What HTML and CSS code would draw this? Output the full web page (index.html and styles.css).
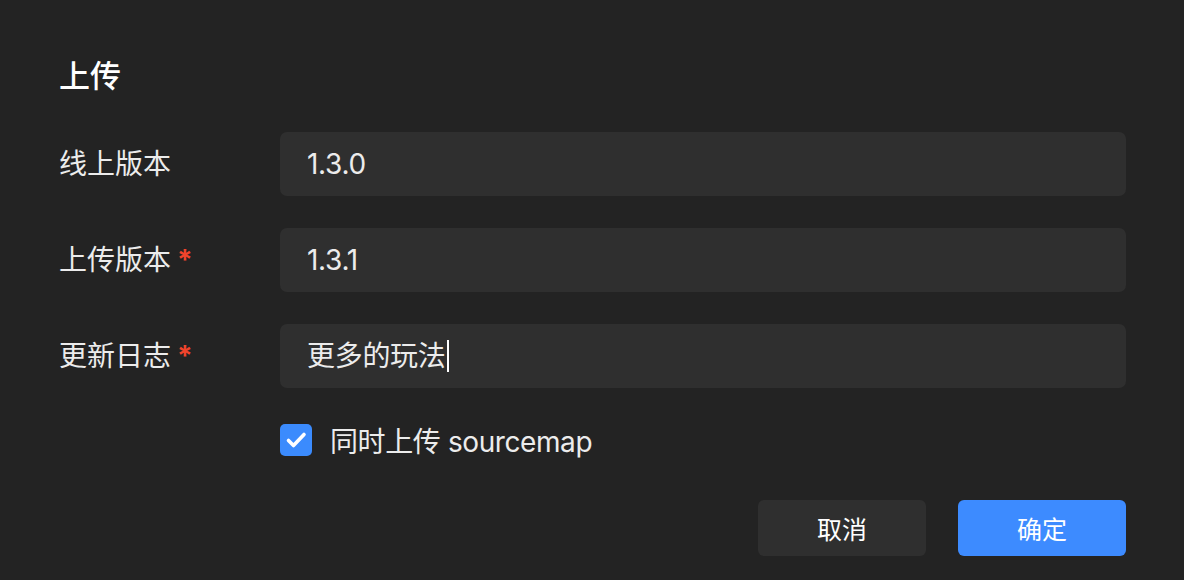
FILE: index.html
```html
<!DOCTYPE html>
<html lang="zh-CN">
<head>
  <meta charset="UTF-8">
  <meta name="viewport" content="width=device-width, initial-scale=1.0">
  <title>上传</title>
  <link rel="stylesheet" href="styles.css">
</head>
<body>
  <div class="dialog">
    <h2 class="title">上传</h2>
    <div class="form">
      <div class="row">
        <label class="label">线上版本</label>
        <div class="field">1.3.0</div>
      </div>
      <div class="row">
        <label class="label">上传版本<span class="req">*</span></label>
        <div class="field">1.3.1</div>
      </div>
      <div class="row">
        <label class="label">更新日志<span class="req">*</span></label>
        <div class="field">更多的玩法<span class="caret"></span></div>
      </div>
      <div class="check-row">
        <span class="checkbox">
          <svg width="32" height="32" viewBox="0 0 32 32"><path d="M8.5 16.5l5 5L24 10.5" fill="none" stroke="#fff" stroke-width="3.6" stroke-linecap="round" stroke-linejoin="round"/></svg>
        </span>
        <span class="check-text">同时上传 sourcemap</span>
      </div>
    </div>
    <div class="actions">
      <button class="btn btn-cancel">取消</button>
      <button class="btn btn-ok">确定</button>
    </div>
  </div>
</body>
</html>
```

FILE: styles.css
```css
body {
  margin: 0;
  background-color: #232323;
  color: #ececec;
  font-family: "Inter", "Noto Sans CJK SC", sans-serif;
}
.dialog {
  padding: 56px 58px 0 59px;
}
.title {
  margin: 0;
  font-size: 31px;
  line-height: 40px;
  font-weight: 500;
  color: #fff;
}
.form {
  margin-top: 36px;
  display: flex;
  flex-direction: column;
  gap: 32px;
}
.row {
  display: flex;
  align-items: center;
}
.label {
  width: 221px;
  flex-shrink: 0;
  font-size: 28px;
  line-height: 64px;
}
.req {
  margin-left: 6px;
  color: #f0442c;
  font-weight: 700;
}
.field {
  flex: 1;
  height: 64px;
  box-sizing: border-box;
  padding: 0 27px;
  background-color: #2f2f2f;
  border-radius: 7px;
  font-size: 28px;
  line-height: 64px;
  letter-spacing: -0.3px;
  display: flex;
  align-items: center;
}
.caret {
  display: inline-block;
  width: 2px;
  height: 32px;
  background-color: #fff;
  margin-left: 1px;
}
.check-row {
  margin-left: 221px;
  margin-top: 4px;
  display: flex;
  align-items: center;
  height: 32px;
}
.checkbox {
  width: 32px;
  height: 32px;
  border-radius: 5px;
  background-color: #3b8bfd;
  display: flex;
  align-items: center;
  justify-content: center;
}
.check-text {
  margin-left: 18px;
  font-size: 28px;
  letter-spacing: -0.4px;
}
.actions {
  margin-top: 44px;
  display: flex;
  justify-content: flex-end;
  gap: 32px;
}
.btn {
  width: 168px;
  height: 56px;
  border: none;
  border-radius: 6px;
  font-family: inherit;
  font-size: 25px;
  color: #fff;
  cursor: pointer;
}
.btn-cancel {
  background-color: #2f2f2f;
}
.btn-ok {
  background-color: #3d8bff;
}
```
